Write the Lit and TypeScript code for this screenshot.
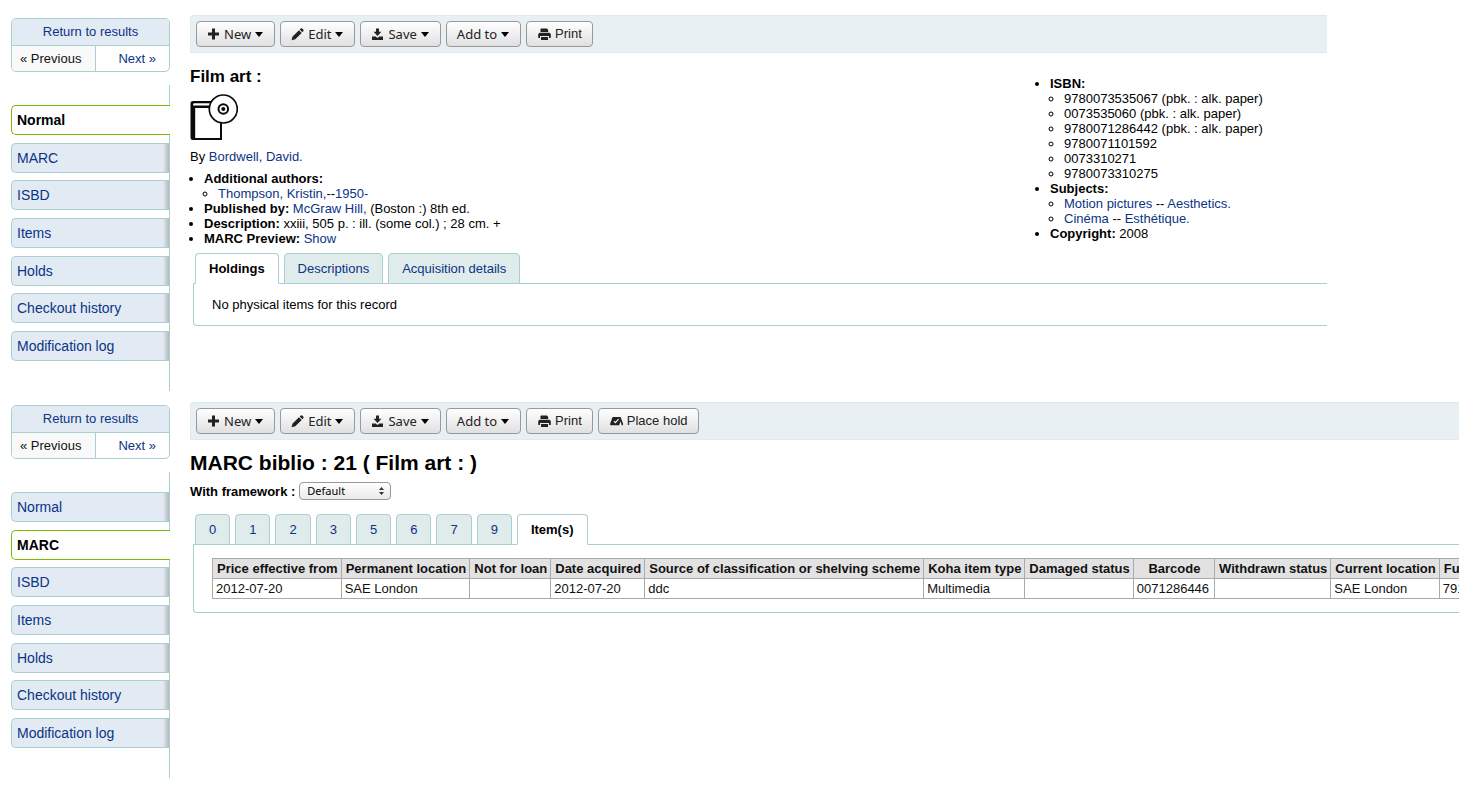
import { LitElement, html, css, svg, nothing } from "lit";
import { customElement, property } from "lit/decorators.js";
import { classMap } from "lit/directives/class-map.js";

const glyphs: Record<string, unknown> = {
  plus: svg`<path d="M5 0.5h3v4h4v3H8v4H5v-4H1v-3h4z"/>`,
  pencil: svg`<path d="M0.5 12.2 1.6 8.6 8 2.2 10.7 4.9 4.3 11.2ZM8.7 1.5 9.8 0.5Q10.5 0 11.2 0.5L12.4 1.8Q13 2.5 12.4 3.1L11.4 4.2Z"/>`,
  save: svg`<path d="M5 0.5h3v3.3h2.4L6.5 8 2.6 3.8H5zM1 8.6h3.6L6.5 10l1.9-1.4H12V12H1z"/>`,
  print: svg`<path d="M3 0.5h6L10.2 2V4H2.5V1zM1.5 4.8h10L12.8 6v3.6Q12.8 10 12.3 10H11V8H2v2H.7Q.2 10 .2 9.6V6zM3 9h7v3H3z"/>`,
  hold: svg`<path d="M2.6 2H10.5L13 8.6V10.2H11.8L10.4 6.2 9.2 10.2H0.6Q-.2 9.6 .2 8.4Z"/><path d="M4 6.2 5.4 7.6 8.6 4.2" fill="none" stroke="#fff" stroke-width="1.1"/>`,
};

const glyph = (name: string) => html`<svg class="glyph" viewBox="0 0 13 13" width="13" height="13" aria-hidden="true">${glyphs[name]}</svg>`;

interface Action {
  label: string;
  icon?: string;
  menu?: boolean;
}

const baseActions: Action[] = [
  { label: "New", icon: "plus", menu: true },
  { label: "Edit", icon: "pencil", menu: true },
  { label: "Save", icon: "save", menu: true },
  { label: "Add to", menu: true },
  { label: "Print", icon: "print" },
];

@customElement("record-toolbar")
class RecordToolbar extends LitElement {
  @property({ attribute: false }) actions: Action[] = [];

  static styles = css`
    :host {
      display: block;
    }
    .bar {
      display: flex;
      gap: 5px;
      padding: 5px;
      border: 1px solid #deebec;
      border-right: 0;
      border-radius: 4px 0 0 0;
      background: #e8f0f3;
    }
    .button {
      box-sizing: border-box;
      display: flex;
      align-items: center;
      gap: 4px;
      height: 26px;
      margin: 0;
      padding: 0 10px 0 11px;
      border: 1px solid #999;
      border-radius: 4px;
      background: linear-gradient(#fff, #e0e0e0);
      color: #222;
      font: 13px/18px "Liberation Sans", Arial, sans-serif;
      white-space: nowrap;
    }
    .menu {
      padding: 0 11px 0 10px;
      font-family: "Noto Sans", sans-serif;
    }
    .glyph {
      fill: #222;
    }
    .caret {
      border: 4px solid transparent;
      border-top: 5px solid #000;
      border-bottom: 0;
    }
  `;

  render() {
    return html`<div class="bar" role="toolbar">
      ${this.actions.map(
        (a) => html`<button type="button" class=${classMap({ button: true, menu: !!a.menu })}>
          ${a.icon ? glyph(a.icon) : nothing}<span>${a.label}</span>${a.menu ? html`<span class="caret"></span>` : nothing}
        </button>`
      )}
    </div>`;
  }
}

const views = ["Normal", "MARC", "ISBD", "Items", "Holds", "Checkout history", "Modification log"];

@customElement("record-sidebar")
class RecordSidebar extends LitElement {
  @property() current = "";

  static styles = css`
    :host {
      display: block;
      padding-top: 3px;
    }
    a {
      color: #0a3484;
      text-decoration: none;
    }
    .pager {
      display: grid;
      grid-template-columns: 84px 1fr;
      border: 1px solid #a9cfcf;
      border-radius: 5px;
      overflow: hidden;
      line-height: 26px;
    }
    .back {
      grid-column: 1 / -1;
      background: #e2eaf4;
      border-bottom: 1px solid #a9cfcf;
      text-align: center;
    }
    .previous {
      padding-left: 8px;
      border-right: 1px solid #a9cfcf;
      background: #f9f9f9;
      color: #111;
      line-height: 25px;
    }
    .next {
      padding-right: 13px;
      text-align: right;
      line-height: 25px;
    }
    .views {
      margin-top: 13px;
      padding: 20px 0 30px;
      border-right: 1px solid #a9cfcf;
    }
    .list {
      display: flex;
      flex-direction: column;
      justify-content: space-between;
      min-height: 256px;
      margin: 0;
      padding: 0;
      list-style: none;
    }
    .view {
      display: block;
      padding: 0 5px;
      border: 1px solid #a9cfcf;
      border-right: 0;
      border-radius: 5px 0 0 5px;
      background: linear-gradient(to left, #b4b8bd, #e2eaf4 6px);
      font-size: 14px;
      line-height: 28px;
    }
    .current {
      position: relative;
      margin-right: -1px;
      border-color: #7dbb00;
      background: #fff;
      color: #000;
      font-weight: bold;
    }
  `;

  render() {
    return html`
      <div class="pager">
        <a class="back" href="#results">Return to results</a>
        <span class="previous">« Previous</span>
        <a class="next" href="#next">Next »</a>
      </div>
      <nav class="views">
        <ul class="list">
          ${views.map(
            (v) => html`<li><a class=${classMap({ view: true, current: v === this.current })} href="#view">${v}</a></li>`
          )}
        </ul>
      </nav>
    `;
  }
}

const columns: [string, string][] = [
  ["Price effective from", "2012-07-20"],
  ["Permanent location", "SAE London"],
  ["Not for loan", ""],
  ["Date acquired", "2012-07-20"],
  ["Source of classification or shelving scheme", "ddc"],
  ["Koha item type", "Multimedia"],
  ["Damaged status", ""],
  ["Barcode", "0071286446"],
  ["Withdrawn status", ""],
  ["Current location", "SAE London"],
  ["Full call number", "791.43"],
];

const isbns = [
  "9780073535067 (pbk. : alk. paper)",
  "0073535060 (pbk. : alk. paper)",
  "9780071286442 (pbk. : alk. paper)",
  "9780071101592",
  "0073310271",
  "9780073310275",
];

@customElement("app-root")
class AppRoot extends LitElement {
  static styles = css`
    :host {
      display: block;
      overflow: hidden;
      min-height: 100vh;
      box-sizing: border-box;
      padding: 15px 0 0 11px;
      background: #fff;
      color: #000;
      font: 13px/15px "Liberation Sans", Arial, Helvetica, sans-serif;
    }
    a {
      color: #0a3484;
      text-decoration: none;
    }
    .record {
      display: grid;
      grid-template-columns: 159px minmax(0, 1fr);
      column-gap: 20px;
      margin-bottom: 11px;
    }
    .inset {
      margin-right: 132px;
    }
    .details {
      display: grid;
      grid-template-columns: minmax(0, 1fr) 291px;
      align-items: start;
    }
    .title {
      margin: 14px 0 7px;
      font-size: 17px;
      line-height: 20px;
    }
    .kind {
      display: block;
    }
    .author {
      margin: 9px 0 7px;
    }
    .facts {
      margin: 0;
      padding-left: 14px;
      list-style: disc;
    }
    .facts ul {
      margin: 0;
      padding-left: 14px;
      list-style: circle;
    }
    .aside {
      padding: 23px 0 0;
    }
    .tabs {
      display: flex;
      gap: 5px;
      margin: 7px 0 0 5px;
    }
    .tab {
      position: relative;
      margin-bottom: -1px;
      padding: 0 13px;
      border: 1px solid #a9cfcf;
      border-radius: 4px 4px 0 0;
      background: #e0ebec;
      color: #0a3484;
      font: 13px/29px "Liberation Sans", Arial, sans-serif;
      white-space: nowrap;
    }
    .chosen {
      border-bottom-color: #fff;
      background: #fff;
      color: #000;
      font-weight: bold;
    }
    .panel {
      margin-left: 3px;
      padding: 13px 0 13px 18px;
      border: 1px solid #a9cfcf;
      border-right: 0;
      border-radius: 0 0 0 4px;
    }
    .message {
      margin: 0;
    }
    .heading {
      margin: 10px 0 7px;
      font-size: 21px;
      line-height: 25px;
    }
    .framework {
      display: flex;
      align-items: center;
      gap: 4px;
      margin-bottom: 14px;
      font-weight: bold;
    }
    .picker {
      position: relative;
      display: flex;
    }
    .select {
      appearance: none;
      box-sizing: border-box;
      width: 92px;
      height: 18px;
      padding: 0 7px;
      border: 1px solid #999;
      border-radius: 4px;
      background: linear-gradient(#fff, #e9e9e9);
      color: #000;
      font: 11px/16px "Noto Sans", sans-serif;
    }
    .arrows {
      position: absolute;
      top: 5px;
      right: 7px;
      pointer-events: none;
    }
    .items {
      border-collapse: collapse;
      white-space: nowrap;
      color: #111;
    }
    .items th,
    .items td {
      height: 15px;
      padding: 2px 3px 2px 4px;
      border: 1px solid #aaa;
    }
    .items th {
      background: #e2e2e2;
    }
    .items td {
      padding: 2px 5px 2px 3px;
    }
  `;

  private tabs(names: string[], chosen: string) {
    return html`<div class="tabs" role="tablist">
      ${names.map(
        (n) => html`<button type="button" role="tab" aria-selected=${n === chosen} class=${classMap({ tab: true, chosen: n === chosen })}>${n}</button>`
      )}
    </div>`;
  }

  private kindIcon() {
    return html`<svg class="kind" width="48" height="46" viewBox="0 0 48 46" role="img" aria-label="Book and disc">
      <path d="M3 7H32V46H2.5Q.5 46 .5 43.5V9.5Q.5 7 3 7Z" fill="#0a0a0a" />
      <path d="M5.2 14H30V44H5.2Z" fill="#fff" />
      <path d="M4 9.2H30V11.6H3Q2.8 9.4 4 9.2Z" fill="#fff" />
      <circle cx="33.3" cy="15" r="14" fill="#fff" stroke="#0a0a0a" stroke-width="1.7" />
      <circle cx="33.3" cy="15" r="4.8" fill="#fff" stroke="#0a0a0a" stroke-width="2" />
      <circle cx="33.3" cy="15" r="2" fill="#0a0a0a" />
    </svg>`;
  }

  render() {
    return html`
      <section class="record">
        <record-sidebar current="Normal"></record-sidebar>
        <main class="inset">
          <record-toolbar .actions=${baseActions}></record-toolbar>
          <div class="details">
            <div>
              <h1 class="title">Film art :</h1>
              ${this.kindIcon()}
              <p class="author">By <a href="#author">Bordwell, David.</a></p>
              <ul class="facts">
                <li><b>Additional authors:</b>
                  <ul><li><a href="#author">Thompson, Kristin,</a>--<a href="#author">1950-</a></li></ul>
                </li>
                <li><b>Published by:</b> <a href="#publisher">McGraw Hill,</a> (Boston :) 8th ed.</li>
                <li><b>Description:</b> xxiii, 505 p. : ill. (some col.) ; 28 cm. +</li>
                <li><b>MARC Preview:</b> <a href="#preview">Show</a></li>
              </ul>
            </div>
            <div class="aside">
              <ul class="facts">
                <li><b>ISBN:</b>
                  <ul>${isbns.map((n) => html`<li>${n}</li>`)}</ul>
                </li>
                <li><b>Subjects:</b>
                  <ul>
                    <li><a href="#subject">Motion pictures</a> -- <a href="#subject">Aesthetics.</a></li>
                    <li><a href="#subject">Cinéma</a> -- <a href="#subject">Esthétique.</a></li>
                  </ul>
                </li>
                <li><b>Copyright:</b> 2008</li>
              </ul>
            </div>
          </div>
          ${this.tabs(["Holdings", "Descriptions", "Acquisition details"], "Holdings")}
          <div class="panel"><p class="message">No physical items for this record</p></div>
        </main>
      </section>

      <section class="record">
        <record-sidebar current="MARC"></record-sidebar>
        <main>
          <record-toolbar .actions=${[...baseActions, { label: "Place hold", icon: "hold" }]}></record-toolbar>
          <h1 class="heading">MARC biblio : 21 ( Film art : )</h1>
          <div class="framework">
            <label for="framework">With framework :</label>
            <span class="picker">
              <select class="select" id="framework"><option>Default</option></select>
              <svg class="arrows" width="5" height="8" viewBox="0 0 5 8" fill="#333" aria-hidden="true"><path d="M2.5 0 5 3H0zM2.5 8 0 5h5z" /></svg>
            </span>
          </div>
          ${this.tabs(["0", "1", "2", "3", "5", "6", "7", "9", "Item(s)"], "Item(s)")}
          <div class="panel">
            <table class="items">
              <thead><tr>${columns.map(([h]) => html`<th scope="col">${h}</th>`)}</tr></thead>
              <tbody><tr>${columns.map(([, v]) => html`<td>${v}</td>`)}</tr></tbody>
            </table>
          </div>
        </main>
      </section>
    `;
  }
}
